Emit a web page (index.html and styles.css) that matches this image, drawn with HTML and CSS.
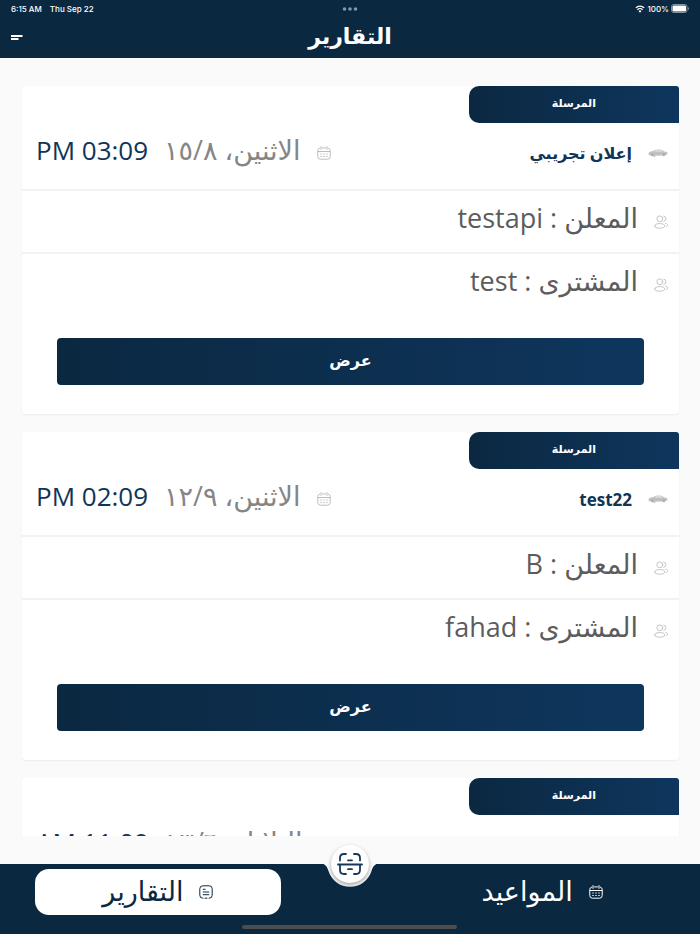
FILE: index.html
```html
<!DOCTYPE html>
<html lang="ar" dir="rtl">
<head>
<meta charset="utf-8">
<meta name="viewport" content="width=device-width, initial-scale=1">
<title>التقارير</title>
<link rel="stylesheet" href="styles.css">
</head>
<body>
<svg class="defs" aria-hidden="true">
  <symbol id="calendar" viewBox="0 0 14 14">
    <path d="M4 .6v2.800M10 .6v2.800M5.500 1.900h3M2.600 2.100A2.400 2.400 0 0 0 .8 4.400v6.200a2.600 2.600 0 0 0 2.600 2.600h7.200a2.600 2.600 0 0 0 2.600-2.600V4.400a2.400 2.400 0 0 0-1.800-2.300M1 5.500h12" fill="none" stroke="currentColor" stroke-linecap="round"/>
    <path d="M3.300 8h1.400M6.300 8h1.400M9.300 8h1.400M3.300 10.500h1.400M6.300 10.500h1.400M9.300 10.500h1.400" fill="none" stroke="currentColor" stroke-width="1.200"/>
  </symbol>
  <symbol id="people" viewBox="0 0 14 14">
    <g fill="none" stroke="currentColor" stroke-width=".9" stroke-linecap="round">
      <circle cx="5.800" cy="3.800" r="2.900"/>
      <path d="M.7 10.900c0-1.500 2-2.300 5-2.300s5 .8 5 2.300-2 2.300-5 2.300-5-.8-5-2.300M9.800 1.100a2.700 2.700 0 0 1 0 5.300M11.600 8.300c1.400.3 2.100 1 2 1.800 0 .7-.5 1.200-1.300 1.500"/>
    </g>
  </symbol>
  <symbol id="car" viewBox="0 0 20 8">
    <path d="M1 3.200C3 2.300 5 2.200 6 1.600 8 .4 12 .3 14 1l2.500 1.500c2 .1 3 .6 3 1.800l-.3 1.500-2 .4a1.700 1.700 0 0 1-3 .3l-6.400.3a1.700 1.700 0 0 1-3.200-.1L1 6.200C.3 5.500.4 4.200 1 3.200Z" fill="#c4c4c4"/>
    <path d="M6.500 2.600c1.500-1.200 3-1.300 4-1.300v1.300zM11.200 1.300c1.500 0 2.500.4 3.500 1.300h-3.500z" fill="#ececec"/>
    <path d="M2 4.300h16" stroke="#aaa" stroke-width=".5"/>
    <circle cx="4.300" cy="6" r="1.200" fill="#aaa"/><circle cx="15.800" cy="5.800" r="1.200" fill="#aaa"/>
  </symbol>
</svg>

<header class="top">
  <div class="status" dir="ltr">
    <span class="when"><span>6:15 AM</span><span>Thu Sep 22</span></span>
    <svg class="dots" viewBox="0 0 16 4" aria-hidden="true"><circle cx="2.500" cy="2" r="1.800"/><circle cx="8" cy="2" r="1.800"/><circle cx="13.500" cy="2" r="1.800"/></svg>
    <span class="power">
      <svg class="wifi" viewBox="0 0 10 8" aria-hidden="true"><path d="M.8 2.900a6 6 0 0 1 8.400 0M2.400 4.700a3.700 3.700 0 0 1 5.200 0" fill="none" stroke="#fff" stroke-width="1.300"/><path d="M3.500 6.100a2.100 2.100 0 0 1 3 0L5 7.700z" fill="#fff"/></svg>
      <span>100%</span>
      <svg class="battery" viewBox="0 0 18 9" aria-hidden="true"><rect x=".5" y=".5" width="15.500" height="8" rx="2.200" fill="none" stroke="#8493a1"/><rect x="1.500" y="1.500" width="13.500" height="6" rx="1.300" fill="#fff"/><path d="M17 3v3q1-.5 1-1.500T17 3" fill="#8493a1"/></svg>
    </span>
  </div>
  <div class="bar">
    <h1>التقارير</h1>
    <button class="menu" type="button" aria-label="القائمة"><svg viewBox="0 0 12 6" aria-hidden="true"><path d="M0 1h11.500M0 4h7.500" stroke="#fff" stroke-width="2"/></svg></button>
  </div>
</header>

<main class="list">
  <article class="card">
    <div class="badge">المرسلة</div>
    <div class="row head">
      <svg class="car"><use href="#car"/></svg>
      <h2>إعلان تجريبي</h2>
      <div class="date"><svg class="icon"><use href="#calendar"/></svg><span class="day">الاثنين، ١٥/٨</span><span class="time" dir="ltr">PM 03:09</span></div>
    </div>
    <div class="row"><svg class="icon"><use href="#people"/></svg><p>المعلن : testapi</p></div>
    <div class="row"><svg class="icon"><use href="#people"/></svg><p>المشترى : test</p></div>
    <button class="view" type="button">عرض</button>
  </article>
  <article class="card">
    <div class="badge">المرسلة</div>
    <div class="row head">
      <svg class="car"><use href="#car"/></svg>
      <h2 dir="ltr">test22</h2>
      <div class="date"><svg class="icon"><use href="#calendar"/></svg><span class="day">الاثنين، ١٢/٩</span><span class="time" dir="ltr">PM 02:09</span></div>
    </div>
    <div class="row"><svg class="icon"><use href="#people"/></svg><p>المعلن : B</p></div>
    <div class="row"><svg class="icon"><use href="#people"/></svg><p>المشترى : fahad</p></div>
    <button class="view" type="button">عرض</button>
  </article>
  <article class="card">
    <div class="badge">المرسلة</div>
    <div class="row head">
      <div class="date"><svg class="icon"><use href="#calendar"/></svg><span class="day">الثلاثاء، ١٣/٦</span><span class="time" dir="ltr">AM 11:09</span></div>
    </div>
  </article>
</main>

<nav class="tabs">
  <a class="tab" href="#appointments"><svg class="icon"><use href="#calendar"/></svg><span>المواعيد</span></a>
  <a class="tab active" href="#reports" aria-current="page"><svg class="icon" viewBox="0 0 14 14" fill="none" stroke="currentColor" stroke-linecap="round" aria-hidden="true"><path d="M4 13.200H3.800a3 3 0 0 1-3-3V3.800a3 3 0 0 1 3-3h6.400a3 3 0 0 1 3 3v6.400a3 3 0 0 1-3 3H10M6 13.200h2M4.200 4.300h2M4.200 7h5.600M4.200 9.700h5.600"/></svg><span>التقارير</span></a>
  <div class="notch">
    <svg class="curve" viewBox="0 0 64 24" aria-hidden="true"><path d="M0 0C7 0 9 3 10.500 8a22.500 22.500 0 0 0 43 0C55 3 57 0 64 0Z" fill="#fafafa"/></svg>
    <button class="scan" type="button" aria-label="مسح"><svg viewBox="0 0 26 22" fill="none" stroke="#14375a" stroke-width="1.800" stroke-linecap="round" aria-hidden="true"><path d="M1 11.500h24M3 7.500V5q0-4 4-4h2M17 1h2q4 0 4 4v2.500M3 12v5q0 4 4 4h2M17 21h2q4 0 4-4v-5M11 7.300h4M11 16.200h4"/></svg></button>
  </div>
  <span class="home"></span>
</nav>
</body>
</html>
```
FILE: styles.css
```css
* { box-sizing: border-box; }
html { height: 100%; }
body {
  margin: 0;
  height: 100%;
  display: flex;
  flex-direction: column;
  overflow: hidden;
  background: #fafafa;
  color: #5c5c5c;
  font-family: "Open Sans", "DejaVu Sans", sans-serif;
}
h1, h2, p { margin: 0; }
button { border: 0; padding: 0; font-family: inherit; cursor: pointer; }
a { text-decoration: none; }
.defs { position: absolute; width: 0; height: 0; }
.icon { width: 14px; height: 14px; flex: none; color: #bdbdbd; }

.top { background: #0b2841; color: #fff; flex: none; }
.status {
  display: grid;
  grid-template-columns: 1fr auto 1fr;
  align-items: center;
  height: 17px;
  padding: 0 11px;
  font: 500 8px/16px Inter, sans-serif;
}
.when { display: flex; gap: 8px; }
.dots { width: 16px; height: 4px; fill: #8298ad; }
.power { display: flex; justify-content: flex-end; align-items: center; gap: 2px; }
.wifi { width: 10px; height: 8px; }
.battery { width: 18px; height: 9px; }
.bar {
  display: grid;
  grid-template-columns: 1fr auto 1fr;
  align-items: center;
  height: 41px;
  padding: 0 11px;
}
.bar h1 { grid-column: 2; font-size: 22px; line-height: 34px; padding-bottom: 6px; }
.menu { justify-self: end; background: none; display: flex; }
.menu svg { width: 12px; height: 6px; }

.list {
  flex: 1;
  min-height: 0;
  overflow: hidden;
  margin-bottom: 28px;
  padding: 28px 21px 0 22px;
}
.card {
  height: 328px;
  margin-bottom: 18px;
  background: #fff;
  border-radius: 4px;
  box-shadow: 0 1px 2px #0000000f;
}
.badge {
  width: 32%;
  height: 37px;
  border-radius: 10px 3px 0 10px;
  background: linear-gradient(90deg, #0b2841, #0e365d);
  color: #fff;
  font-size: 11px;
  font-weight: 700;
  line-height: 34px;
  text-align: center;
}
.row {
  display: flex;
  align-items: center;
  gap: 16px;
  height: 63px;
  padding: 0 11px 0 14px;
  border-bottom: 2px solid #f2f2f2;
  font-size: 27px;
}
.row p { line-height: 56px; padding-bottom: 7px; }
.row:nth-last-child(2) { border-bottom-color: transparent; }
.row.head { height: 68px; padding-bottom: 6px; border-bottom-color: #f2f2f2; }
.car { width: 20px; height: 8px; flex: none; }
.head h2 { font-size: 16px; color: #0f3558; }
.head h2[dir="ltr"] { font-size: 17px; }
.date { display: flex; align-items: center; gap: 16px; margin-right: auto; line-height: 40px; }
.day, .time { padding-bottom: 6px; }
.day { color: #858585; }
.time { color: #0f3558; font-size: 26px; font-weight: 500; }
.view {
  display: block;
  width: calc(100% - 70px);
  height: 47px;
  margin: 21px auto 0;
  padding-bottom: 4px;
  border-radius: 4px;
  background: linear-gradient(90deg, #0b2841, #0e365d);
  color: #fff;
  font-size: 16px;
  font-weight: 700;
}

.tabs {
  position: relative;
  flex: none;
  display: flex;
  justify-content: space-between;
  height: 70px;
  padding: 5px 35px 0;
  background: #0b2841;
}
.tab {
  display: flex;
  align-items: center;
  justify-content: center;
  gap: 16px;
  width: 39%;
  height: 46px;
  border-radius: 14px;
  color: #fff;
  font-size: 27px;
}
.tab span { padding-bottom: 3px; }
.tab .icon { color: inherit; }
.tab.active { background: #fff; color: #0b2841; }
.notch { position: absolute; top: -1px; left: calc(50% - 32px); width: 64px; height: 24px; }
.curve { display: block; width: 64px; height: 24px; }
.scan {
  position: absolute;
  top: -18px;
  left: 13px;
  width: 38px;
  height: 38px;
  display: flex;
  align-items: center;
  justify-content: center;
  border-radius: 50%;
  background: #fff;
  box-shadow: 0 2px 4px #00000059;
}
.scan svg { width: 26px; height: 22px; }
.home {
  position: absolute;
  bottom: 5px;
  left: calc(50% - 108px);
  width: 215px;
  height: 4px;
  border-radius: 2px;
  background: #4d4d4d;
}
```
